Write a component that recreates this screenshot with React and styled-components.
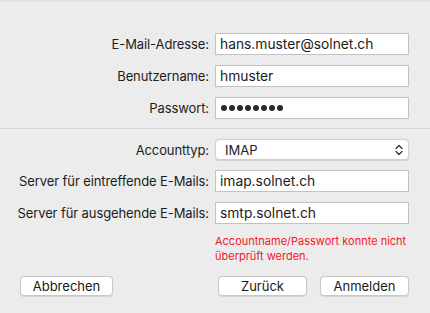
import styled, { createGlobalStyle } from 'styled-components'

const Global = createGlobalStyle`
  html, body {
    margin: 0;
    padding: 0;
    background: #ececec;
  }
  body {
    font-family: Inter, "Noto Sans", "Liberation Sans", sans-serif;
    font-size: 13px;
    color: #1c1c1c;
  }
`

const Sheet = styled.div`
  width: 430px;
  height: 313px;
  box-sizing: border-box;
  border-top: 2px solid #e2e2e2;
  background: #ececec;
  display: flex;
  flex-direction: column;
`

const Form = styled.div`
  display: grid;
  grid-template-columns: 1fr 194px;
  column-gap: 6px;
  row-gap: 10px;
  align-items: center;
  padding: ${p => p.$top}px 21px 0 0;
`

const Label = styled.label`
  text-align: right;
  white-space: nowrap;
  letter-spacing: -0.1px;
`

const Field = styled.div`
  height: 22px;
  box-sizing: border-box;
  border: 1px solid #c2c2c2;
  background: #fff;
  padding: 0 4px;
  display: flex;
  align-items: center;
  font-size: 13.8px;
  color: #1a1a1a;
`

const Dots = styled.div`
  display: flex;
  gap: 2px;
  padding-left: 1px;
`

const Dot = styled.span`
  width: 6px;
  height: 6px;
  border-radius: 50%;
  background: #2a2a2a;
`

const Divider = styled.div`
  margin-top: 9px;
  height: 1px;
  background: #d6d6d6;
  border-bottom: 1px solid #f4f4f4;
`

const Select = styled.div`
  height: 21px;
  box-sizing: border-box;
  border-radius: 4px;
  background: #fff;
  border: 1px solid #d0d0d0;
  box-shadow: 0 0.5px 1px rgba(0, 0, 0, 0.12);
  display: flex;
  align-items: center;
  justify-content: space-between;
  padding: 0 4px 0 9px;
`

const Error = styled.div`
  margin: 10px 0 0 215px;
  font-size: 11px;
  line-height: 15px;
  color: #f2172b;
  width: 200px;
`

const Buttons = styled.div`
  display: flex;
  align-items: center;
  padding: 0 21px 0 20px;
  margin-top: 12px;
`

const Button = styled.button`
  width: ${p => p.$w}px;
  height: 20px;
  box-sizing: border-box;
  background: #fff;
  border: 1px solid #c8c8c8;
  border-radius: 4px;
  box-shadow: 0 0.5px 1px rgba(0, 0, 0, 0.1);
  font-family: inherit;
  font-size: 13px;
  color: #1a1a1a;
  padding: 0;
  margin-left: ${p => p.$ml || 0}px;
`

const Chevron = () => (
  <svg width="10" height="14" viewBox="0 0 10 14">
    <path d="M2 5.5 L5 2.5 L8 5.5 M2 8.5 L5 11.5 L8 8.5" fill="none" stroke="#333" strokeWidth="1.3" strokeLinecap="round" strokeLinejoin="round" />
  </svg>
)

export default function App() {
  return (
    <>
      <Global />
      <Sheet>
        <Form $top={31}>
          <Label>E-Mail-Adresse:</Label>
          <Field>hans.muster@solnet.ch</Field>
          <Label>Benutzername:</Label>
          <Field>hmuster</Field>
          <Label>Passwort:</Label>
          <Field>
            <Dots>
              {Array.from({ length: 8 }).map((_, i) => <Dot key={i} />)}
            </Dots>
          </Field>
        </Form>
        <Divider />
        <Form $top={9}>
          <Label>Accounttyp:</Label>
          <Select>
            <span>IMAP</span>
            <Chevron />
          </Select>
          <Label>Server für eintreffende E-Mails:</Label>
          <Field>imap.solnet.ch</Field>
          <Label>Server für ausgehende E-Mails:</Label>
          <Field>smtp.solnet.ch</Field>
        </Form>
        <Error>Accountname/Passwort konnte nicht überprüft werden.</Error>
        <Buttons>
          <Button $w={93}>Abbrechen</Button>
          <Button $w={89} $ml={105}>Zurück</Button>
          <Button $w={89} $ml={13}>Anmelden</Button>
        </Buttons>
      </Sheet>
    </>
  )
}
